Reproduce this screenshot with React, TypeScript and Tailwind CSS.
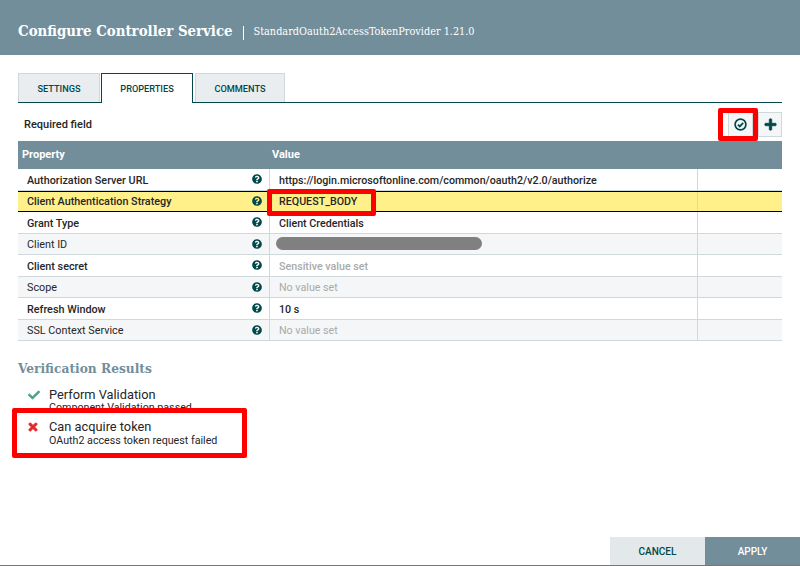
import React from 'react';
import { FaCheck, FaPlus, FaQuestionCircle, FaTimes } from 'react-icons/fa';

interface Row {
  name: string;
  value: string;
  required: boolean;
  kind?: 'muted' | 'hidden';
  selected?: boolean;
}

const rows: Row[] = [
  { name: 'Authorization Server URL', value: 'https://login.microsoftonline.com/common/oauth2/v2.0/authorize', required: true },
  { name: 'Client Authentication Strategy', value: 'REQUEST_BODY', required: true, selected: true },
  { name: 'Grant Type', value: 'Client Credentials', required: true },
  { name: 'Client ID', value: '', required: false, kind: 'hidden' },
  { name: 'Client secret', value: 'Sensitive value set', required: true, kind: 'muted' },
  { name: 'Scope', value: 'No value set', required: false, kind: 'muted' },
  { name: 'Refresh Window', value: '10 s', required: true },
  { name: 'SSL Context Service', value: 'No value set', required: false, kind: 'muted' },
];

const slab = { fontFamily: '"DejaVu Serif Condensed", "DejaVu Serif", serif' };

const App: React.FC = () => {
  return (
    <div className="relative flex h-[566px] w-[800px] flex-col overflow-hidden bg-white font-['Roboto',sans-serif] text-[#262626]">
      <div className="flex h-[55px] items-center bg-[#728e9b] pl-[18px] pt-[8px] text-white">
        <span className="text-[14.85px] font-bold" style={slab}>Configure Controller Service</span>
        <span className="mx-[10px] mt-[2px] h-[14px] w-px bg-white"></span>
        <span className="mt-[2px] text-[10.8px]" style={slab}>StandardOauth2AccessTokenProvider 1.21.0</span>
      </div>

      <div className="flex flex-1 flex-col px-[18px] pt-[18px]">
        <div className="flex h-[30px] items-end border-b border-[#004849] text-[9.2px] font-medium text-[#004849]">
          <div className="mr-px flex h-[29px] w-[82px] items-center justify-center border border-b-0 border-[#cfd9dc] bg-[#e9edf0] pt-px">SETTINGS</div>
          <div className="relative top-px mr-[2px] flex h-[30px] w-[92px] items-center justify-center border border-b-0 border-[#004849] bg-white pt-px">PROPERTIES</div>
          <div className="flex h-[29px] w-[90px] items-center justify-center border border-b-0 border-[#cfd9dc] bg-[#e9edf0] pt-px">COMMENTS</div>
        </div>

        <div className="flex h-[38px] items-center justify-between pt-[5px]">
          <span className="pl-[6px] pt-px text-[11px] font-medium">Required field</span>
          <div className="flex gap-[5px]">
            <div className="flex h-[25px] w-[25px] items-center justify-center border border-[#cfd9dc] bg-[#f4f6f7]">
              <svg viewBox="0 0 14 14" className="h-[13px] w-[13px]" fill="none" stroke="#004849">
                <circle cx="7" cy="7" r="5.8" strokeWidth="1.8" />
                <path d="M4.2 7.1 6.2 9.1 9.9 5.2" strokeWidth="1.8" />
              </svg>
            </div>
            <div className="flex h-[25px] w-[24px] items-center justify-center border border-[#cfd9dc] bg-[#f4f6f7] text-[#004849]"><FaPlus className="h-[13px] w-[13px]" stroke="currentColor" strokeWidth={30} /></div>
          </div>
        </div>

        <div className="flex h-[28px] items-center bg-[#728e9b] text-[11px] font-bold text-white">
          <span className="w-[251px] pl-1">Property</span>
          <span className="pl-[3px]">Value</span>
        </div>

        {rows.map((row, i) => (
          <div
            key={row.name}
            className={`flex h-[21.5px] items-stretch text-[10.8px] ${
              row.selected ? 'border-y border-black bg-[#fff08a]' : `border-b border-[#cfd9dc] ${i % 2 === 1 ? 'bg-[#f4f6f7]' : 'bg-white'}`
            }`}
          >
            <div className={`flex w-[251px] items-center justify-between pl-[9px] pr-[7px] ${row.required ? 'font-medium' : ''}`}>
              <span className={row.selected ? 'pt-px' : 'pt-[3px]'}>{row.name}</span>
              <FaQuestionCircle className="h-[10px] w-[10px] text-[#004849]" />
            </div>
            <div className="flex w-[428px] items-center border-l border-[#cfd9dc] pl-[9px] text-[10.7px]">
              {row.kind === 'hidden' ? (
                <span className="ml-[-3px] h-[13px] w-[206px] rounded-full bg-[#808080]"></span>
              ) : (
                <span className={`${row.selected ? 'pt-px' : 'pt-[3px]'} ${row.kind === 'muted' ? (row.required ? 'font-medium text-[#aaaaaa]' : 'text-[#aaaaaa]') : 'font-medium'}`}>{row.value}</span>
              )}
            </div>
            <div className="flex-1 border-l border-[#cfd9dc]"></div>
          </div>
        ))}

        <h2 className="mt-[18px] text-[13.6px] font-bold leading-[18px] text-[#728e9b]" style={slab}>Verification Results</h2>

        <div className="mt-[10px] flex pl-[10px]">
          <FaCheck className="mt-[2px] h-[12px] w-[12px] text-[#4fa37f]" />
          <div className="ml-[9px]">
            <div className="text-[12.8px] font-[450] leading-[15px]">Perform Validation</div>
            <div className="text-[10.7px] leading-[12px]">Component Validation passed</div>
          </div>
        </div>
        <div className="mt-[5px] flex pl-[10px]">
          <FaTimes className="mt-[2px] h-[12px] w-[10px] text-[#e3262b]" stroke="currentColor" strokeWidth={40} />
          <div className="ml-[11px]">
            <div className="text-[12.8px] font-[450] leading-[15px]">Can acquire token</div>
            <div className="text-[10.7px] leading-[14px]">OAuth2 access token request failed</div>
          </div>
        </div>
      </div>

      <div className="flex h-[29px] justify-end border-b border-[#777777] text-[10px] font-medium">
        <div className="flex w-[95px] items-center justify-center bg-[#e3e8eb] text-[#004849]">CANCEL</div>
        <div className="flex w-[95px] items-center justify-center bg-[#728e9b] text-white">APPLY</div>
      </div>

      {/* red annotation boxes drawn over the screenshot */}
      <div className="pointer-events-none absolute left-[718px] top-[108px] h-[33px] w-[40px] rounded-[2px] border-[5px] border-[#ff0000]"></div>
      <div className="pointer-events-none absolute left-[267px] top-[189px] h-[27px] w-[109px] rounded-[2px] border-[5px] border-[#ff0000]"></div>
      <div className="pointer-events-none absolute left-[12px] top-[408px] h-[50px] w-[235px] rounded-[2px] border-[5px] border-[#ff0000]"></div>
    </div>
  );
};

export default App;
